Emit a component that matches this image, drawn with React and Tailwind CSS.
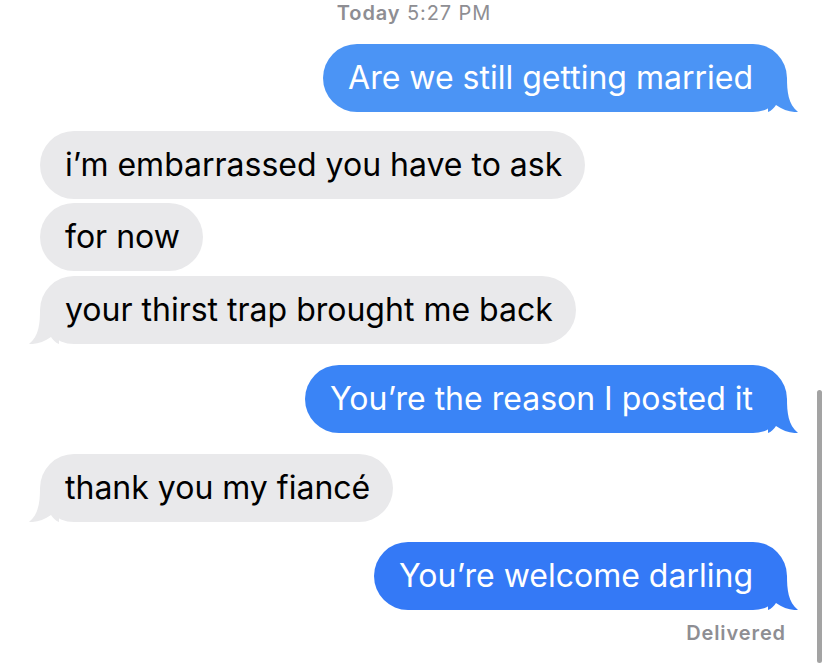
import React from 'react';

const font = { fontFamily: 'Inter, "Noto Sans", sans-serif' };

// bubble tail, drawn for the right side; mirrored for incoming messages
const Tail = ({ color, side }) => (
  <svg
    width="30"
    height="34"
    viewBox="0 0 30 34"
    className={
      side === 'right'
        ? 'absolute bottom-0 right-[-11px]'
        : 'absolute bottom-0 left-[-11px] -scale-x-100'
    }
  >
    <path
      d="M0 34 L0 0 L19 0 C19 13 20 26 30 34 C23 34.5 15 32 8 27 C6 30 3 33 0 34 Z"
      fill={color}
    />
  </svg>
);

const Bubble = ({ text, out, color, tail, className = '' }) => (
  <div className={`flex ${out ? 'justify-end pr-[41px]' : 'justify-start pl-[40px]'} ${className}`}>
    <div
      className={`relative h-[68px] flex items-center rounded-[34px] text-[32px] ${
        out ? 'pl-[25px] pr-[34px] text-white' : 'pl-[25px] pr-[23px] text-black bg-[#e9e9eb]'
      }`}
      style={out ? { backgroundColor: color } : undefined}
    >
      <span className="relative z-10 whitespace-nowrap">{text}</span>
      {tail && <Tail color={out ? color : '#e9e9eb'} side={out ? 'right' : 'left'} />}
    </div>
  </div>
);

export default function App() {
  return (
    <div className="relative w-[828px] h-[671px] bg-white overflow-hidden" style={font}>
      <div className="pt-[1px] h-[44px] text-center text-[20px] tracking-[0.9px] text-[#8e8e93] leading-[24px]">
        <span className="font-semibold">Today</span> 5:27 PM
      </div>

      <Bubble out color="#4b94f5" tail text="Are we still getting married" />

      <Bubble className="mt-[19px]" text="i’m embarrassed you have to ask" />
      <Bubble className="mt-[4px]" text="for now" />
      <Bubble className="mt-[5px]" tail text="your thirst trap brought me back" />

      <Bubble className="mt-[21px]" out color="#3a84f6" tail text="You’re the reason I posted it" />

      <Bubble className="mt-[21px]" tail text="thank you my fiancé" />

      <Bubble className="mt-[20px]" out color="#3479f6" tail text="You’re welcome darling" />

      <div className="pr-[42px] mt-[11px] text-right text-[20px] tracking-[0.9px] font-semibold text-[#8e8e93] leading-[24px]">
        Delivered
      </div>

      {/* scroll indicator */}
      <div className="absolute right-[6px] top-[390px] h-[273px] w-[5px] rounded-full bg-[#a3a3a3]" />
    </div>
  );
}
